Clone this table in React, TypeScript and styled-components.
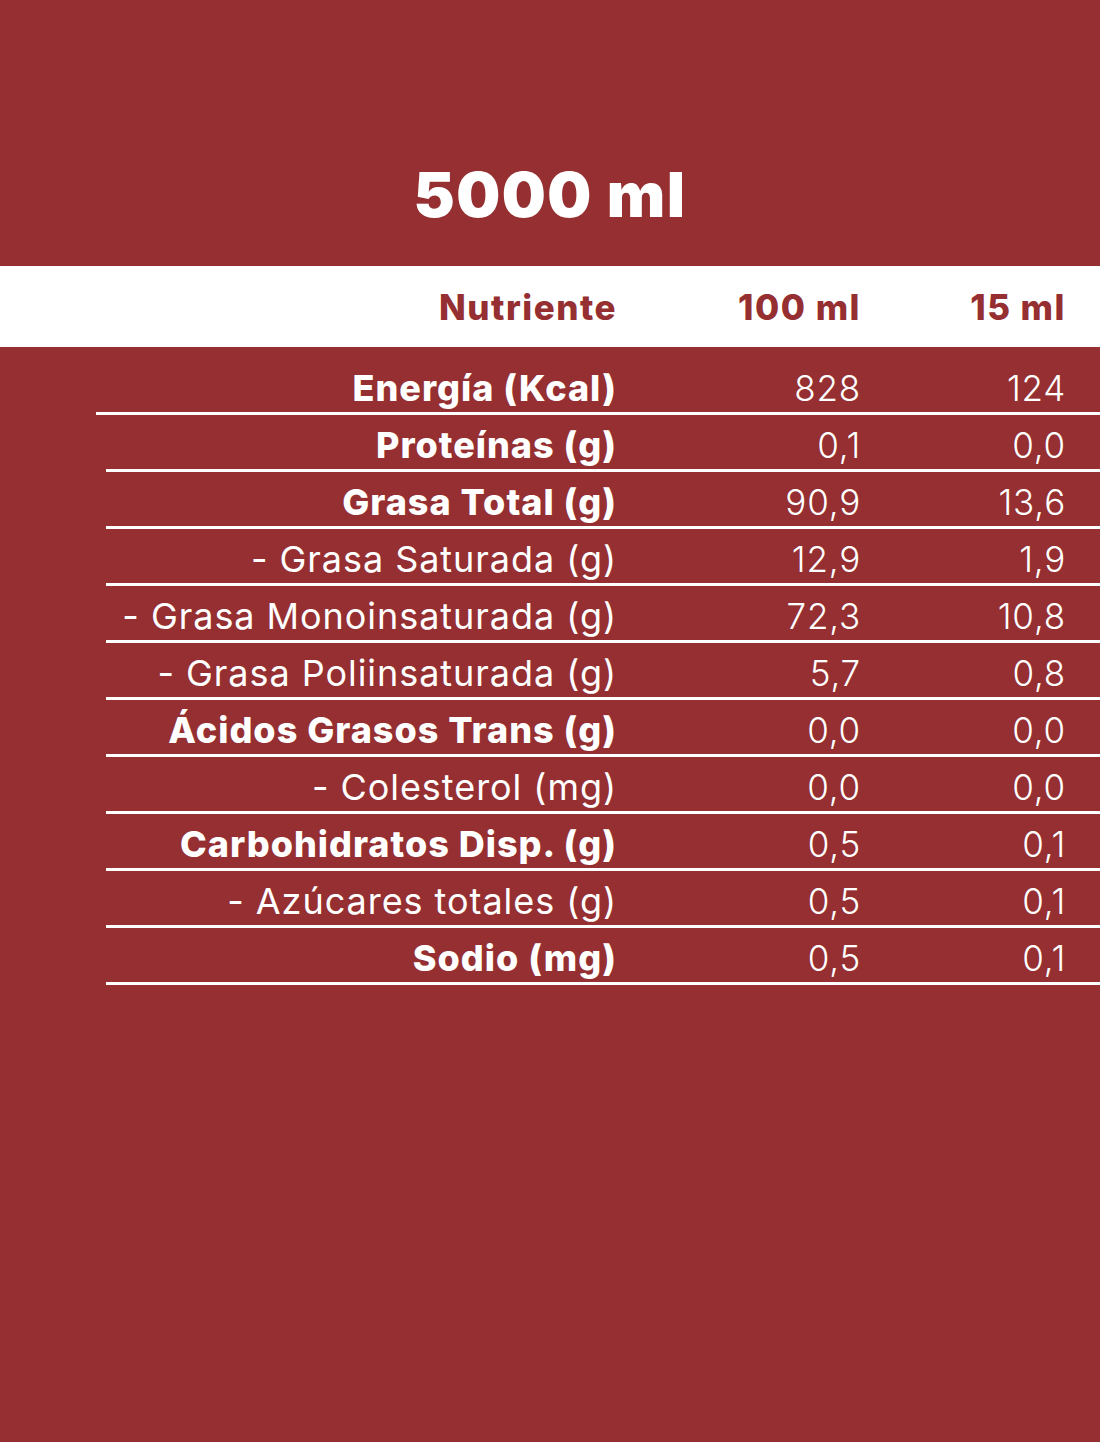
import React from "react";
import styled, { createGlobalStyle } from "styled-components";

const Global = createGlobalStyle`
  html, body { margin: 0; padding: 0; background: #952F31; }
  body { font-family: "Inter", "Liberation Sans", sans-serif; }
`;

const Page = styled.div`
  width: 1100px;
  min-height: 1442px;
  background: #952F31;
  color: #fff;
`;

const TitleBlock = styled.div`
  height: 266px;
  display: flex;
  align-items: flex-end;
  justify-content: center;
  box-sizing: border-box;
  padding-bottom: 40px;
`;

const Title = styled.h1`
  margin: 0;
  font-family: "Inter", sans-serif;
  font-weight: 900;
  font-size: 62px;
  line-height: 1;
  letter-spacing: 1.5px;
  color: #fff;
`;

const HeaderBar = styled.div`
  background: #fff;
  height: 81px;
  display: grid;
  grid-template-columns: 1fr 244px 205px;
  padding: 0 34px 0 106px;
  align-items: center;
  box-sizing: border-box;
`;

const HeadCell = styled.div`
  text-align: right;
  font-family: "Inter", "Liberation Sans", sans-serif;
  font-weight: 800;
  font-size: 35px;
  letter-spacing: 1.5px;
  color: #952F31;
`;

const Body = styled.div`
  padding-top: 11px;
`;

const Row = styled.div<{ $indent: number }>`
  display: grid;
  grid-template-columns: 1fr 244px 205px;
  height: 54px;
  margin-left: ${(p) => p.$indent}px;
  padding-right: 34px;
  border-bottom: 3px solid #fff;
  align-items: center;
`;

const Label = styled.div<{ $bold: boolean }>`
  text-align: right;
  font-size: 36px;
  font-weight: ${(p) => (p.$bold ? 800 : 400)};
  letter-spacing: ${(p) => (p.$bold ? "1px" : "0.95px")};
  padding-top: 6px;
  white-space: nowrap;
`;

const Value = styled.div`
  text-align: right;
  font-size: 35px;
  font-weight: 300;
  letter-spacing: 0.8px;
  padding-top: 6px;
`;

const rows: { label: string; bold: boolean; a: string; b: string }[] = [
  { label: "Energía (Kcal)", bold: true, a: "828", b: "124" },
  { label: "Proteínas (g)", bold: true, a: "0,1", b: "0,0" },
  { label: "Grasa Total (g)", bold: true, a: "90,9", b: "13,6" },
  { label: "- Grasa Saturada (g)", bold: false, a: "12,9", b: "1,9" },
  { label: "- Grasa Monoinsaturada (g)", bold: false, a: "72,3", b: "10,8" },
  { label: "- Grasa Poliinsaturada (g)", bold: false, a: "5,7", b: "0,8" },
  { label: "Ácidos Grasos Trans (g)", bold: true, a: "0,0", b: "0,0" },
  { label: "- Colesterol (mg)", bold: false, a: "0,0", b: "0,0" },
  { label: "Carbohidratos Disp. (g)", bold: true, a: "0,5", b: "0,1" },
  { label: "- Azúcares totales (g)", bold: false, a: "0,5", b: "0,1" },
  { label: "Sodio (mg)", bold: true, a: "0,5", b: "0,1" },
];

export default function App() {
  return (
    <Page>
      <Global />
      <TitleBlock>
        <Title>5000 ml</Title>
      </TitleBlock>
      <HeaderBar>
        <HeadCell>Nutriente</HeadCell>
        <HeadCell>100 ml</HeadCell>
        <HeadCell>15 ml</HeadCell>
      </HeaderBar>
      <Body>
        {rows.map((r, i) => (
          <Row key={r.label} $indent={i === 0 ? 96 : 106}>
            <Label $bold={r.bold}>{r.label}</Label>
            <Value>{r.a}</Value>
            <Value>{r.b}</Value>
          </Row>
        ))}
      </Body>
    </Page>
  );
}
